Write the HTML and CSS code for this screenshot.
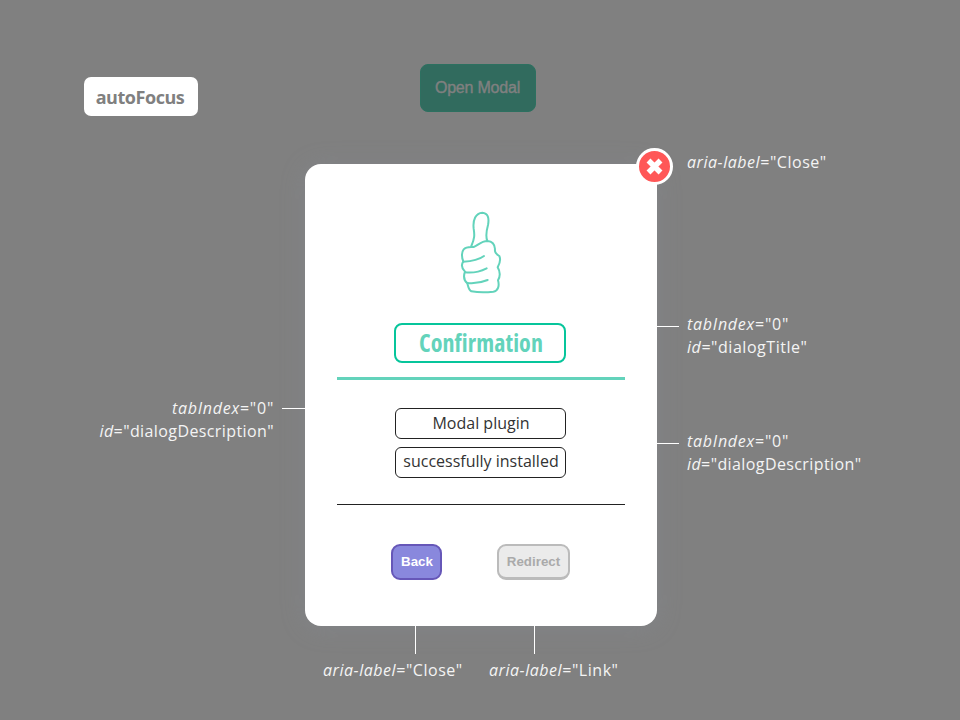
FILE: index.html
```
<!DOCTYPE html>
<html lang="en">
<head>
<meta charset="utf-8">
<title>Accessible modal</title>
<link rel="stylesheet" href="styles.css">
</head>
<body>
<header class="top">
  <span class="focus-tag">autoFocus</span>
  <button class="open">Open Modal</button>
</header>
<main class="dialog" role="dialog" aria-labelledby="dialogTitle">
  <button class="close" aria-label="Close">
    <svg width="37" height="37" viewBox="0 0 37 37"><circle cx="18.500" cy="18.500" r="17" fill="#ff5757" stroke="#fff" stroke-width="3"/><path d="M12.500 12.500l12 12M24.500 12.500l-12 12" stroke="#fff" stroke-width="5.500"/></svg>
  </button>
  <svg class="thumb" width="80" height="100" viewBox="0 0 240 300" fill="none" stroke="#63d3bb" stroke-width="6" stroke-linecap="round" stroke-linejoin="round">
    <path d="M94 138C104 116 104 105 101 86C98 60 107 39 127 38C144 39 148 55 144 75C138 97 137 111 142 123C155 124 164 131 165 147C163 158 169 163 178 168C184 181 178 193 173 202C182 217 182 227 174 241C179 258 174 273 160 275C140 277 113 277 94 274C86 270 85 261 82 250C73 242 70 228 75 215C64 204 64 193 70 184C64 171 65 155 71 148C79 140 90 142 101 141C113 137 123 123 142 123"/>
    <path d="M70 185C94 184 116 180 132 168M75 217C99 220 122 214 140 205M82 249C103 251 124 248 143 240"/>
  </svg>
  <h1 class="title" id="dialogTitle" tabindex="0">Confirmation</h1>
  <hr class="rule rule-green">
  <p class="line" tabindex="0">Modal plugin</p>
  <p class="line" tabindex="0">successfully installed</p>
  <hr class="rule">
  <div class="actions">
    <button class="btn back">Back</button>
    <button class="btn redirect">Redirect</button>
  </div>
  <div class="note n-close"><span><i>aria-label</i>="Close"</span></div>
  <div class="note n-title lead"><span class="index"><i>tabIndex</i>="0"</span><span><i>id</i>="dialogTitle"</span></div>
  <div class="note n-right lead"><span class="index"><i>tabIndex</i>="0"</span><span class="description"><i>id</i>="dialogDescription"</span></div>
  <div class="note n-left lead"><span class="index"><i>tabIndex</i>="0"</span><span class="description"><i>id</i>="dialogDescription"</span></div>
  <div class="note n-back drop"><span><i>aria-label</i>="Close"</span></div>
  <div class="note n-link drop"><span><i>aria-label</i>="Link"</span></div>
</main>
</body>
</html>
```
FILE: styles.css
```
* { box-sizing: border-box; }
body { margin: 0; width: 960px; height: 720px; overflow: hidden; background: #808080; font-family: "Open Sans", sans-serif; }
button { padding: 0; margin: 0; font-family: "Liberation Sans", sans-serif; font-weight: 700; }
.top { display: flex; align-items: flex-start; height: 164px; padding: 64px 0 0 84px; }
.focus-tag { display: flex; align-items: center; justify-content: center; width: 114px; height: 39px; margin: 13px 221.5px 0 0; padding: 1px 2px 0 0; border-radius: 7px; background: #fff; color: #808080; font: 700 18px/24px "Open Sans", sans-serif; letter-spacing: -.45px; }
.open { width: 116px; height: 48px; border: 1px solid #2d7060; border-radius: 8px; background: #316b5e; color: #808080; font-size: 16px; font-weight: 400; letter-spacing: -.2px; -webkit-text-stroke: .4px #808080; }
.dialog { position: relative; display: flex; flex-direction: column; align-items: center; width: 352px; height: 462px; margin-left: 305px; padding: 36px 32px 0; border-radius: 16px; background: #fff; box-shadow: 0 2px 24px rgba(136, 145, 158, .28); }
.close { position: absolute; left: 331px; top: -16px; width: 37px; height: 37px; border: 0; background: none; }
.close svg { display: block; }
.thumb { flex: none; margin-right: 2px; }
.title { display: flex; align-items: center; justify-content: center; width: 172px; height: 40px; margin: 23px 2px 14px 0; border: 2px solid #06c59b; border-radius: 8px; color: #63d3bb; font: 700 24px/34px "Open Sans", sans-serif; font-stretch: 75%; letter-spacing: .1px; padding-left: 2px; }
.rule { width: 288px; height: 1px; margin: 26px 0 39px; border: 0; background: #222; flex: none; }
.rule-green { height: 3px; margin: 0 0 28px; background: #63d3bb; }
.line { display: flex; align-items: center; justify-content: center; width: 171px; height: 31px; margin: 0 1px 0 0; padding: 0 0 2px 1px; border: 1px solid #222; border-radius: 6px; color: #333; font: 400 16px/24px "Open Sans", sans-serif; }
.line + .line { margin-top: 8px; padding-bottom: 4px; }
.actions { display: flex; gap: 55px; margin-right: 2px; }
.btn { height: 36px; border: 2px solid #6657b8; border-radius: 9px; font-size: 13.333px; }
.back { width: 51px; padding: 0 0 2px 2px; background: #8988dd; color: #fff; }
.redirect { width: 73px; padding-left: 1px; border-color: #bbb; background: #ebebeb; color: #aaa; border-bottom-width: 3px; }
.note { position: absolute; color: #f4f4f4; font: 400 16px/23px "Open Sans", sans-serif; letter-spacing: .54px; }
.note > span { display: block; white-space: nowrap; }
.note .index { letter-spacing: .75px; }
.note .description { letter-spacing: .4px; }
.n-close { left: 382px; top: -13px; }
.n-title { left: 382px; top: 149px; }
.n-right { left: 382px; top: 266px; }
.n-left { right: 383px; top: 233px; text-align: right; }
.n-back { left: 18px; top: 495px; }
.n-link { left: 184px; top: 495px; }
.lead::before, .drop::before { content: ""; position: absolute; background: #fff; }
.lead::before { left: -30px; top: 13px; width: 22px; height: 1px; }
.n-left::before { left: auto; right: -32px; top: 11px; width: 24px; }
.drop::before { left: 92px; top: -33px; width: 1px; height: 28px; }
.n-link::before { left: 45px; }
```
